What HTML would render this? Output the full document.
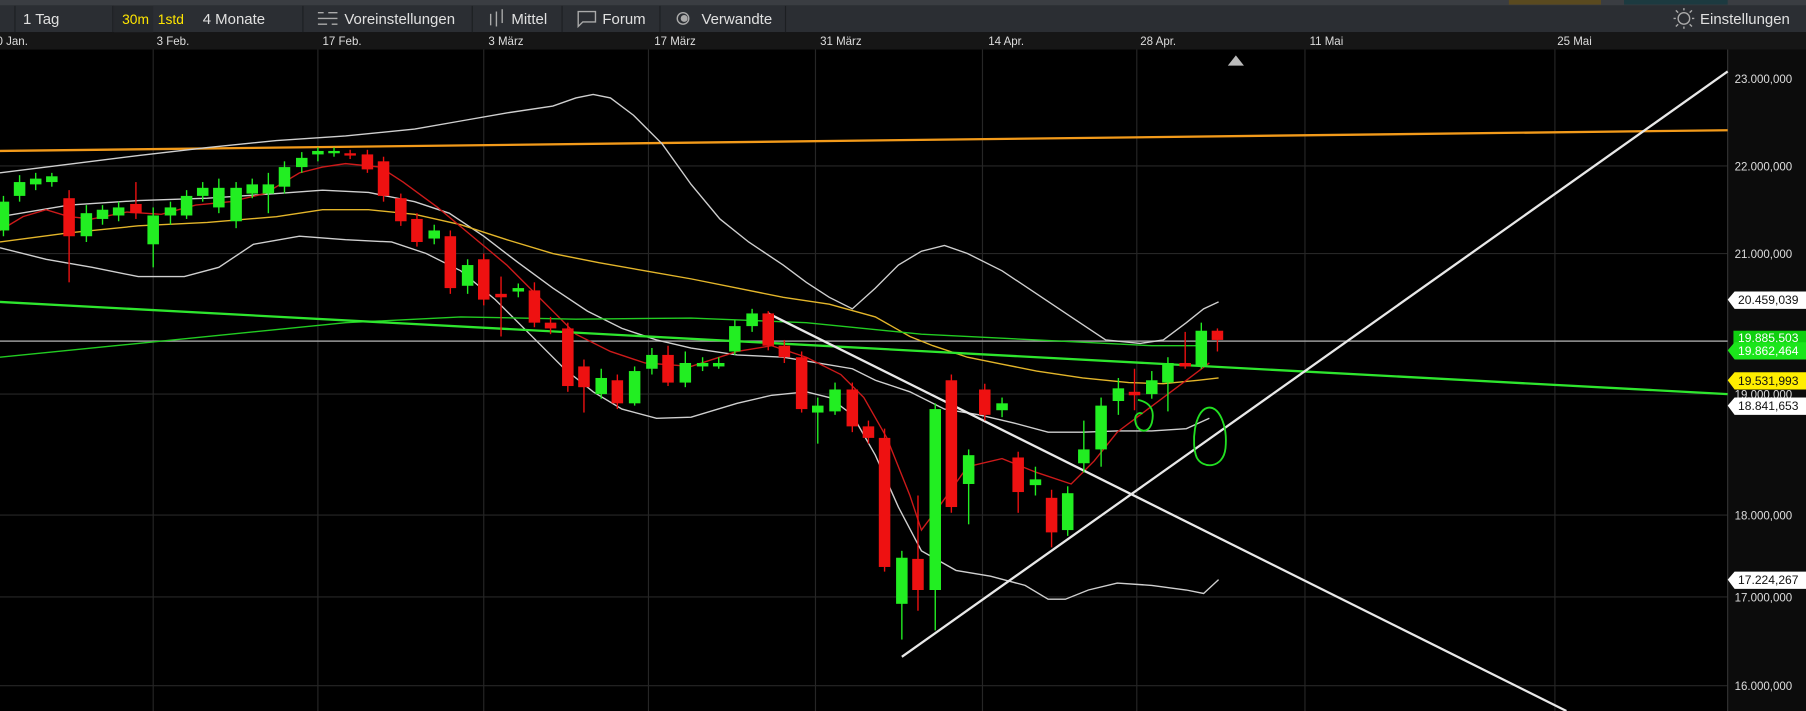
<!DOCTYPE html><html><head><meta charset="utf-8"><style>
html,body{margin:0;padding:0;background:#000;width:1806px;height:711px;overflow:hidden}
svg{display:block}
text{font-family:"Liberation Sans",sans-serif}
</style></head><body>
<svg id="s" width="1806" height="711" viewBox="0 0 1568 617" preserveAspectRatio="none" xmlns="http://www.w3.org/2000/svg">
<rect x="0" y="0" width="1568" height="617" fill="#000"/>
<rect x="0" y="0" width="1568" height="5" fill="#3a3d42"/>
<rect x="1310" y="0" width="80" height="4" fill="#5a4a20"/>
<rect x="1410" y="0" width="90" height="4" fill="#1c3a40"/>
<rect x="0" y="5" width="1568" height="23" fill="#2b2e33"/>
<rect x="0" y="28" width="1568" height="15" fill="#161616"/>
<g stroke="#1c1f22" stroke-width="1">
<line x1="13" y1="5" x2="13" y2="28"/><line x1="98" y1="5" x2="98" y2="28"/><line x1="263" y1="5" x2="263" y2="28"/><line x1="410" y1="5" x2="410" y2="28"/><line x1="488" y1="5" x2="488" y2="28"/><line x1="573" y1="5" x2="573" y2="28"/><line x1="682" y1="5" x2="682" y2="28"/>
</g>
<rect x="99" y="5" width="34" height="23" fill="#26292d"/>
<g font-size="13" fill="#e0e0e0">
<text x="20" y="21">1 Tag</text>
<text x="106" y="21" fill="#ffe600" font-size="12">30m</text>
<text x="137" y="21" fill="#ffe600" font-size="12">1std</text>
<text x="176" y="21">4 Monate</text>
<text x="299" y="21">Voreinstellungen</text>
<text x="444" y="21">Mittel</text>
<text x="523" y="21">Forum</text>
<text x="609" y="21">Verwandte</text>
<text x="1476" y="21">Einstellungen</text>
</g>
<g stroke="#aaa" stroke-width="1.2" fill="none">
<line x1="276" y1="11" x2="281" y2="11"/><line x1="285" y1="11" x2="293" y2="11"/><line x1="276" y1="16" x2="293" y2="16"/><line x1="276" y1="21" x2="284" y2="21"/><line x1="288" y1="21" x2="293" y2="21"/>
<line x1="426" y1="12" x2="426" y2="22"/><line x1="431" y1="10" x2="431" y2="23"/><line x1="436" y1="8" x2="436" y2="20"/>
<path d="M502 10h15v9h-11l-4 4z"/>
<circle cx="593" cy="16" r="5"/>
<circle cx="1462" cy="16" r="5"/><path d="M1462 9v-2M1462 23v2M1455 16h-2M1469 16h2M1457 11l-2-2M1467 11l2-2M1457 21l-2 2M1467 21l2 2"/>
</g>
<circle cx="594" cy="16" r="3" fill="#aaa"/>
<g font-size="10" fill="#ddd">
<text x="-3" y="39">0 Jan.</text><text x="136" y="39">3 Feb.</text><text x="280" y="39">17 Feb.</text><text x="424" y="39">3 März</text><text x="568" y="39">17 März</text><text x="712" y="39">31 März</text><text x="858" y="39">14 Apr.</text><text x="990" y="39">28 Apr.</text><text x="1137" y="39">11 Mai</text><text x="1352" y="39">25 Mai</text>
</g>
<g stroke="#262626" stroke-width="1">
<line x1="133" y1="43" x2="133" y2="617"/><line x1="276" y1="43" x2="276" y2="617"/><line x1="420" y1="43" x2="420" y2="617"/><line x1="563" y1="43" x2="563" y2="617"/><line x1="708" y1="43" x2="708" y2="617"/><line x1="853" y1="43" x2="853" y2="617"/><line x1="987" y1="43" x2="987" y2="617"/><line x1="1133" y1="43" x2="1133" y2="617"/><line x1="1350" y1="43" x2="1350" y2="617"/>
<line x1="0" y1="144" x2="1500" y2="144"/><line x1="0" y1="220" x2="1500" y2="220"/><line x1="0" y1="342" x2="1500" y2="342"/><line x1="0" y1="447" x2="1500" y2="447"/><line x1="0" y1="518" x2="1500" y2="518"/><line x1="0" y1="595" x2="1500" y2="595"/>
</g>
<rect x="1500" y="43" width="68" height="574" fill="#0c0c0c"/>
<line x1="1500" y1="43" x2="1500" y2="617" stroke="#333"/>
<path d="M1066 57l7-9 7 9z" fill="#bbb"/>
<line x1="0" y1="296" x2="1500" y2="296" stroke="#9a9a9a" stroke-width="1.3"/>
<line x1="0" y1="131" x2="1500" y2="113" stroke="#f29a1a" stroke-width="2"/>
<g fill="none" stroke-width="1.2">
<polyline stroke="#cfcfcf" points="0,150 40,145 80,140 120,135 180,128 240,122 300,118 360,112 400,105 440,98 480,92 500,85 515,82 530,85 550,100 575,125 600,160 625,190 650,210 680,230 700,245 720,258 740,268 760,250 780,230 800,218 820,213 840,220 870,235 900,255 930,275 960,295 990,298 1010,295 1030,280 1045,268 1058,262"/>
<polyline stroke="#cfcfcf" points="0,215 40,225 80,232 120,240 160,240 190,232 220,212 260,205 300,208 340,210 370,220 400,235 430,260 460,290 490,320 515,340 540,355 570,363 600,362 640,350 670,343 700,340 720,345 740,360 760,395 780,440 800,478 830,495 860,500 890,508 910,520 925,520 945,512 970,506 1000,508 1030,512 1045,515 1058,503"/>
<polyline stroke="#cfcfcf" points="0,188 60,178 120,174 180,172 240,168 280,165 320,167 360,175 390,185 420,205 450,228 480,250 510,270 540,285 570,295 600,302 640,308 680,310 710,315 740,320 760,330 790,340 820,355 850,360 880,367 910,375 940,375 970,374 1000,374 1030,372 1050,363"/>
<polyline stroke="#e3b52a" points="0,210 60,202 120,196 180,193 240,188 280,182 320,182 360,186 400,195 440,208 480,220 520,228 560,235 600,242 640,250 680,258 720,264 760,275 790,292 810,300 840,310 870,316 900,322 940,328 980,332 1010,333 1040,330 1058,328"/>
<polyline stroke="#cc1a1a" points="0,200 20,188 40,182 60,188 80,190 110,184 140,186 170,178 200,175 230,168 260,150 280,145 300,142 330,145 350,158 380,180 410,205 440,230 470,260 500,290 530,305 560,315 600,318 640,305 670,300 700,310 730,325 750,345 770,380 790,430 800,460 815,440 840,405 870,398 900,410 930,420 950,400 970,375 990,360 1010,345 1030,330 1050,315"/>
<polyline stroke="#22cc22" points="0,310 100,300 200,290 300,280 400,275 500,277 600,276 700,280 800,290 900,295 1000,300 1040,300"/>
</g>
<line x1="0" y1="262" x2="1500" y2="342" stroke="#2ee62e" stroke-width="2"/>
<line x1="667" y1="272" x2="1360" y2="617" stroke="#e8e8e8" stroke-width="2"/>
<polyline points="783,570 783,570 1500,62" stroke="#e8e8e8" stroke-width="2" fill="none"/>
<g id="c"></g>
<g fill="none" stroke="#22e022" stroke-width="1.6">
<path d="M988 347c10 2 15 8 12 20c-3 10-12 8-14 0c-2-7 3-10 6-8"/>
<path d="M1048 354c10-3 18 15 16 35c-2 18-20 18-25 8c-5-12-2-40 9-43z"/>
</g>
<g font-size="10" fill="#ddd">
<text x="1506" y="72">23.000,000</text><text x="1506" y="148">22.000,000</text><text x="1506" y="224">21.000,000</text><text x="1506" y="346">19.000,000</text><text x="1506" y="451">18.000,000</text><text x="1506" y="522">17.000,000</text><text x="1506" y="599">16.000,000</text>
</g>
<g font-size="10.5">
<path d="M1500 260l6-7h62v15h-62z" fill="#fff"/><text x="1509" y="264" fill="#111">20.459,039</text>
<rect x="1505" y="287" width="63" height="12" fill="#10d010"/><text x="1509" y="297" fill="#fff">19.885,503</text>
<path d="M1500 304l6-7h62v15h-62z" fill="#1be61b"/><text x="1509" y="308" fill="#fff">19.862,464</text>
<path d="M1500 330l6-7h62v15h-62z" fill="#ffee00"/><text x="1509" y="334" fill="#111">19.531,993</text>
<path d="M1500 352l6-7h62v15h-62z" fill="#fff"/><text x="1509" y="356" fill="#111">18.841,653</text>
<path d="M1500 503l6-7h62v15h-62z" fill="#fff"/><text x="1509" y="507" fill="#111">17.224,267</text>
</g>
</svg>
<script>
var d=[[3,'g',175,200,170,205],[17,'g',158,170,152,175],[31,'g',155,160,150,165],[45,'g',153,158,150,162],[60,'r',172,205,165,245],[75,'g',185,205,178,210],[89,'g',182,190,178,195],[103,'g',180,187,175,192],[118,'r',177,185,158,190],[133,'g',187,212,180,232],[148,'g',180,187,175,195],[162,'g',170,187,165,190],[176,'g',163,170,158,175],[190,'g',163,180,155,185],[205,'g',163,192,158,198],[219,'g',160,168,155,172],[233,'g',160,168,150,185],[247,'g',145,162,140,168],[262,'g',137,145,132,150],[276,'g',131,134,128,140],[290,'g',131,133,128,136],[304,'r',133,135,130,138],[319,'r',134,147,130,150],[333,'r',140,170,136,175],[348,'r',172,192,168,196],[362,'r',190,210,185,214],[377,'g',200,207,195,212],[391,'r',205,250,200,255],[406,'g',230,248,225,255],[420,'r',225,260,220,265],[435,'r',255,258,240,292],[450,'g',250,253,246,258],[464,'r',252,280,245,284],[478,'r',280,285,275,290],[493,'r',285,335,280,340],[507,'r',318,336,312,358],[522,'g',328,342,320,346],[536,'r',330,350,325,355],[551,'g',322,350,318,352],[566,'g',308,320,302,325],[580,'r',308,332,300,335],[595,'g',315,332,305,336],[610,'g',315,318,310,322],[624,'g',315,318,310,320],[638,'g',283,305,278,308],[653,'g',272,283,268,288],[667,'r',272,300,270,304],[681,'r',300,310,295,315],[696,'r',310,355,305,358],[710,'g',352,358,345,385],[725,'g',338,357,332,360],[740,'r',338,370,332,375],[754,'r',370,380,365,385],[768,'r',380,492,372,496],[783,'g',484,524,478,555],[797,'r',485,512,430,530],[812,'g',355,512,350,547],[826,'r',330,440,325,445],[841,'g',395,420,390,455],[855,'r',338,360,333,365],[870,'g',350,356,345,362],[884,'r',397,427,392,445],[899,'g',416,421,405,430],[913,'r',432,462,425,475],[927,'g',428,460,422,465],[941,'g',390,402,365,410],[956,'g',352,390,345,405],[971,'g',337,348,328,360],[985,'r',340,343,320,356],[1000,'g',330,342,322,346],[1014,'g',315,332,310,357],[1029,'r',315,318,288,320],[1043,'g',287,317,280,320],[1057,'r',287,295,285,305]];
var g=document.getElementById('c'),h='';
d.forEach(function(c){var col=c[1]=='g'?'#22ee22':'#ee1111';
h+='<line x1="'+c[0]+'" x2="'+c[0]+'" y1="'+c[4]+'" y2="'+c[5]+'" stroke="'+col+'" stroke-width="1.2"/>';
h+='<rect x="'+(c[0]-5)+'" y="'+c[2]+'" width="10" height="'+Math.max(2,c[3]-c[2])+'" fill="'+col+'"/>';});
g.innerHTML=h;
</script>
</body></html>
